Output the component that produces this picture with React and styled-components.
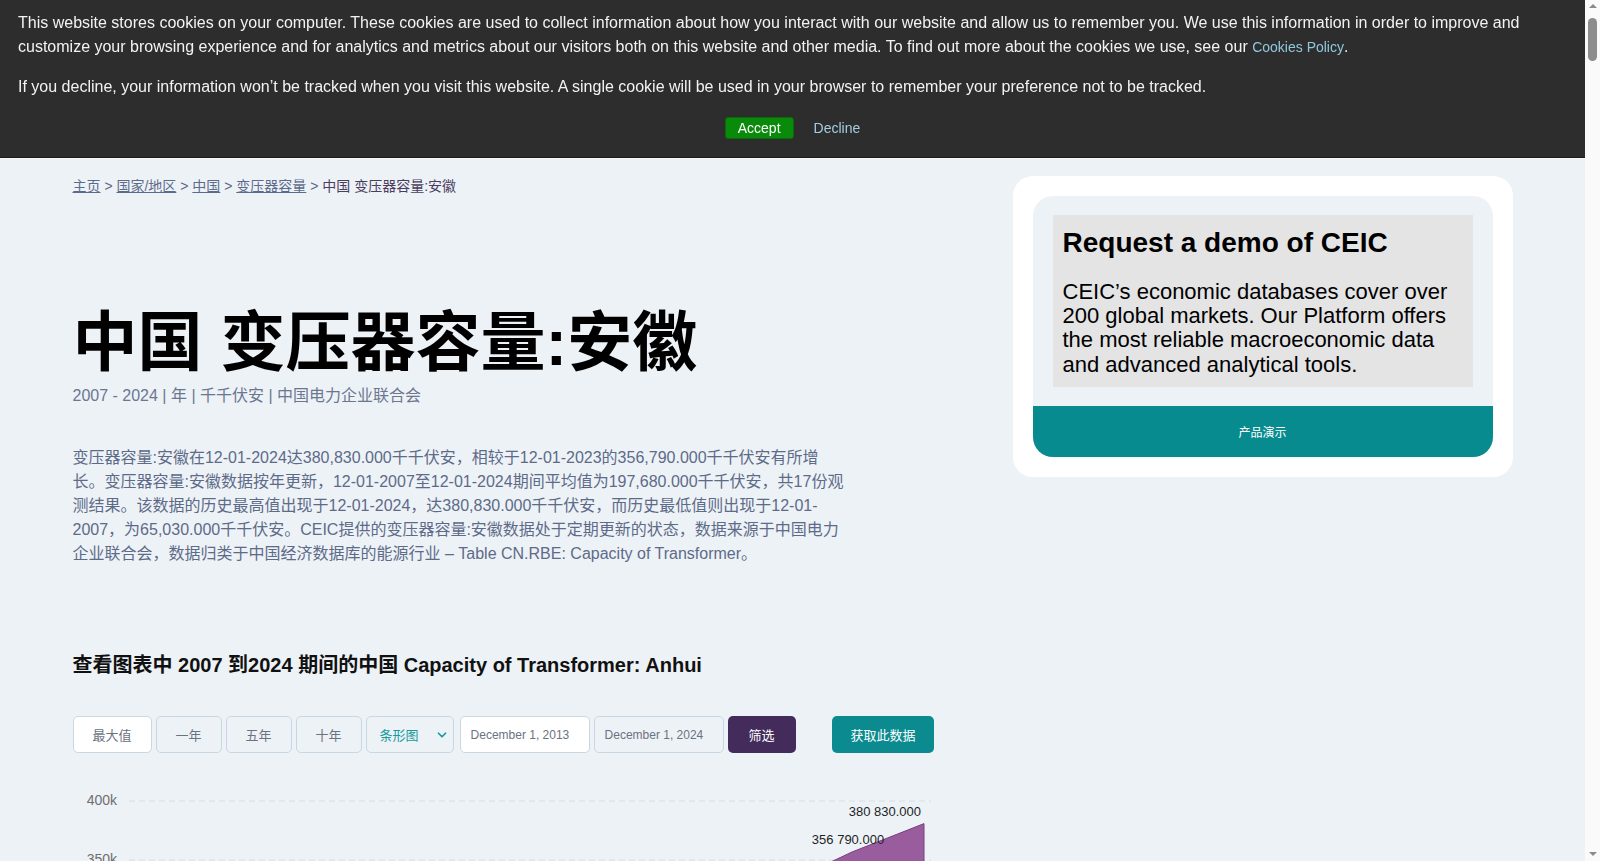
import React from 'react'
import styled, { createGlobalStyle } from 'styled-components'
import { ChevronDown } from 'lucide-react'

const GlobalStyle = createGlobalStyle`
  body {
    margin: 0;
    background: #edf2f7;
    font-family: "Liberation Sans", "Noto Sans CJK SC", sans-serif;
  }
  #root {
    padding-right: 15px;
  }
`

const ScrollTrack = styled.div`
  position: fixed;
  top: 0;
  right: 0;
  bottom: 0;
  z-index: 20;
  width: 15px;
  background: #fafafa;
  display: flex;
  flex-direction: column;
  align-items: center;
`
const Arrow = styled.span`
  width: 0;
  height: 0;
  border-left: 4px solid transparent;
  border-right: 4px solid transparent;
  ${(p) => (p.$down ? 'border-top: 4px solid #8a8a8a;' : 'border-bottom: 4px solid #8a8a8a;')}
  margin: ${(p) => (p.$down ? 'auto 0 5px' : '4px 0 0')};
`
const Thumb = styled.span`
  width: 9px;
  height: 43px;
  margin-top: 10px;
  border-radius: 5px;
  background: #8d8d8d;
`

const Banner = styled.div`
  position: fixed;
  top: 0;
  left: 0;
  right: 15px;
  z-index: 10;
  height: 158px;
  box-sizing: border-box;
  padding: 11px 18px 0;
  background: #2d2d2d;
  color: #f2f2f2;
  font-size: 16px;
  line-height: 24px;
  border-bottom: 1px solid #1c1c1c;
  box-shadow: 0 1px 0 #f7f8fa;
`
const BannerText = styled.p`
  margin: 0 0 16px;
`
const PolicyLink = styled.a`
  color: #8fc8dc;
  font-size: 14px;
  text-decoration: none;
`
const BannerButtons = styled.div`
  display: flex;
  justify-content: center;
  align-items: center;
  gap: 20px;
  margin-top: 18px;
`
const AcceptButton = styled.button`
  font-family: inherit;
  font-size: 14px;
  line-height: 16px;
  padding: 2px 12px;
  color: #fff;
  background: #0a8a0a;
  border: 1px solid #076b07;
  border-radius: 3px;
`
const DeclineButton = styled.button`
  font-family: inherit;
  font-size: 14px;
  line-height: 16px;
  padding: 3px 0;
  color: #a4cde0;
  background: none;
  border: none;
`

const Page = styled.div`
  width: 1440px;
  margin: 0 auto;
  padding-top: 176px;
  display: grid;
  grid-template-columns: 861px 500px;
  justify-content: space-between;
  align-items: start;
`
const Main = styled.main`
  display: flex;
  flex-direction: column;
`
const Breadcrumb = styled.nav`
  font-size: 14px;
  line-height: 20px;
  color: #5c6884;
`
const Crumb = styled.a`
  color: #5d6b8b;
  text-decoration: underline;
`
const Current = styled.span`
  color: #4b3d5e;
`
const Title = styled.h1`
  margin: 109px 0 0;
  font-size: 65px;
  line-height: 76px;
  font-weight: bold;
  color: #000;
`
const Meta = styled.div`
  margin-top: 3px;
  font-size: 16px;
  line-height: 24px;
  color: #6b778f;
`
const Description = styled.p`
  margin: 38px 0 0;
  width: 778px;
  font-size: 16px;
  line-height: 24px;
  color: #5d6b88;
`
const ChartTitle = styled.h2`
  margin: 85px 0 0;
  font-size: 20px;
  line-height: 28px;
  font-weight: bold;
  color: #111;
`
const Controls = styled.div`
  display: flex;
  gap: 4px;
  margin-top: 37px;
  height: 37px;
`
const RangeButton = styled.button`
  font-family: inherit;
  font-size: 13px;
  padding: 0 19px;
  color: #6b7280;
  background: ${(p) => (p.$active ? '#fff' : '#edf2f7')};
  border: 1px solid #c9d7e2;
  border-radius: 5px;
`
const Select = styled.div`
  display: flex;
  align-items: center;
  justify-content: space-between;
  width: 88px;
  margin-right: 2px;
  box-sizing: border-box;
  padding: 0 4px 0 13px;
  font-size: 13px;
  color: #169b9d;
  border: 1px solid #c9d7e2;
  border-radius: 5px;
`
const DateInput = styled.input`
  width: 130px;
  box-sizing: border-box;
  padding: 0 10px;
  font-family: inherit;
  font-size: 12px;
  color: #6b7280;
  background: ${(p) => (p.$active ? '#fff' : '#edf2f7')};
  border: 1px solid #c9d7e2;
  border-radius: 5px;
`
const ActionButton = styled.button`
  font-family: inherit;
  font-size: 13px;
  font-weight: normal;
  padding: 0 ${(p) => (p.$wide ? '18px' : '21px')};
  margin-left: ${(p) => (p.$wide ? 'auto' : '0')};
  color: #fff;
  background: ${(p) => p.$color};
  border: none;
  border-radius: 5px;
`
const Chart = styled.svg`
  display: block;
  margin-top: 28px;
  font-family: "Liberation Sans", sans-serif;
`

const Aside = styled.aside`
  background: #fff;
  border-radius: 20px;
  padding: 20px;
`
const DemoCard = styled.div`
  background: #edf2f7;
  border-radius: 20px;
  overflow: hidden;
`
const DemoText = styled.div`
  margin: 19px 20px;
  padding: 12px 10px 10px;
  background: #e4e4e4;
  color: #000;
`
const DemoTitle = styled.h3`
  margin: 0 0 21px;
  font-size: 28px;
  line-height: 32px;
  font-weight: bold;
`
const DemoBody = styled.p`
  margin: 0;
  font-size: 22px;
  line-height: 24.2px;
`
const DemoButton = styled.button`
  display: block;
  width: 100%;
  height: 51px;
  font-family: inherit;
  font-size: 12px;
  color: #fff;
  background: #088b8f;
  border: none;
`

const values = [140000, 152000, 163000, 181000, 201000, 222000, 246000, 271000, 300000, 328000, 356790, 380830]

function AreaChart() {
  const x = (i) => 59 + i * 72
  const y = (v) => 20 + ((400000 - v) / 50000) * 59
  const base = y(0)
  const line = values.map((v, i) => `${x(i)},${y(v)}`).join(' L')
  const area = `M${x(0)},${base} L${line} L${x(11)},${base} Z`
  const ticks = [400000, 350000, 300000, 250000, 200000, 150000, 100000, 50000, 0]
  return (
    <Chart width="861" height="530">
      {ticks.map((t) => (
        <g key={t}>
          <line x1="56" x2="858" y1={y(t)} y2={y(t)} stroke="#d9dee5" strokeDasharray="6 4" />
          <text x="44" y={y(t) + 4} textAnchor="end" fontSize="14" fill="#6f6f6f">
            {t / 1000}k
          </text>
        </g>
      ))}
      <path d={area} fill="#995d9d" stroke="#7b3f80" strokeWidth="1" />
      <text x="775" y="63" textAnchor="middle" fontSize="13" fill="#1f1f1f">
        356 790.000
      </text>
      <text x="848" y="35" textAnchor="end" fontSize="13" fill="#1f1f1f">
        380 830.000
      </text>
    </Chart>
  )
}

export default function App() {
  return (
    <>
      <GlobalStyle />
      <Banner>
        <BannerText>
          This website stores cookies on your computer. These cookies are used to collect information about how you
          interact with our website and allow us to remember you. We use this information in order to improve and
          customize your browsing experience and for analytics and metrics about our visitors both on this website and
          other media. To find out more about the cookies we use, see our <PolicyLink href="#">Cookies Policy</PolicyLink>.
        </BannerText>
        <BannerText>
          If you decline, your information won’t be tracked when you visit this website. A single cookie will be used in
          your browser to remember your preference not to be tracked.
        </BannerText>
        <BannerButtons>
          <AcceptButton>Accept</AcceptButton>
          <DeclineButton>Decline</DeclineButton>
        </BannerButtons>
      </Banner>
      <ScrollTrack>
        <Arrow />
        <Thumb />
        <Arrow $down />
      </ScrollTrack>
      <Page>
        <Main>
          <Breadcrumb>
            <Crumb href="#">主页</Crumb> &gt; <Crumb href="#">国家/地区</Crumb> &gt; <Crumb href="#">中国</Crumb> &gt;{' '}
            <Crumb href="#">变压器容量</Crumb> &gt; <Current>中国 变压器容量:安徽</Current>
          </Breadcrumb>
          <Title>中国 变压器容量:安徽</Title>
          <Meta>2007 - 2024 | 年 | 千千伏安 | 中国电力企业联合会</Meta>
          <Description>
            变压器容量:安徽在12-01-2024达380,830.000千千伏安，相较于12-01-2023的356,790.000千千伏安有所增长。变压器容量:安徽数据按年更新，12-01-2007至12-01-2024期间平均值为197,680.000千千伏安，共17份观测结果。该数据的历史最高值出现于12-01-2024，达380,830.000千千伏安，而历史最低值则出现于12-01-2007，为65,030.000千千伏安。CEIC提供的变压器容量:安徽数据处于定期更新的状态，数据来源于中国电力企业联合会，数据归类于中国经济数据库的能源行业
            – Table CN.RBE: Capacity of Transformer。
          </Description>
          <ChartTitle>查看图表中 2007 到2024 期间的中国 Capacity of Transformer: Anhui</ChartTitle>
          <Controls>
            <RangeButton $active>最大值</RangeButton>
            <RangeButton>一年</RangeButton>
            <RangeButton>五年</RangeButton>
            <RangeButton>十年</RangeButton>
            <Select>
              条形图
              <ChevronDown size={14} strokeWidth={3} />
            </Select>
            <DateInput $active defaultValue="December 1, 2013" />
            <DateInput defaultValue="December 1, 2024" />
            <ActionButton $color="#432c5c">筛选</ActionButton>
            <ActionButton $color="#0b8b8f" $wide>
              获取此数据
            </ActionButton>
          </Controls>
          <AreaChart />
        </Main>
        <Aside>
          <DemoCard>
            <DemoText>
              <DemoTitle>Request a demo of CEIC</DemoTitle>
              <DemoBody>
                CEIC’s economic databases cover over 200 global markets. Our Platform offers the most reliable
                macroeconomic data and advanced analytical tools.
              </DemoBody>
            </DemoText>
            <DemoButton>产品演示</DemoButton>
          </DemoCard>
        </Aside>
      </Page>
    </>
  )
}
